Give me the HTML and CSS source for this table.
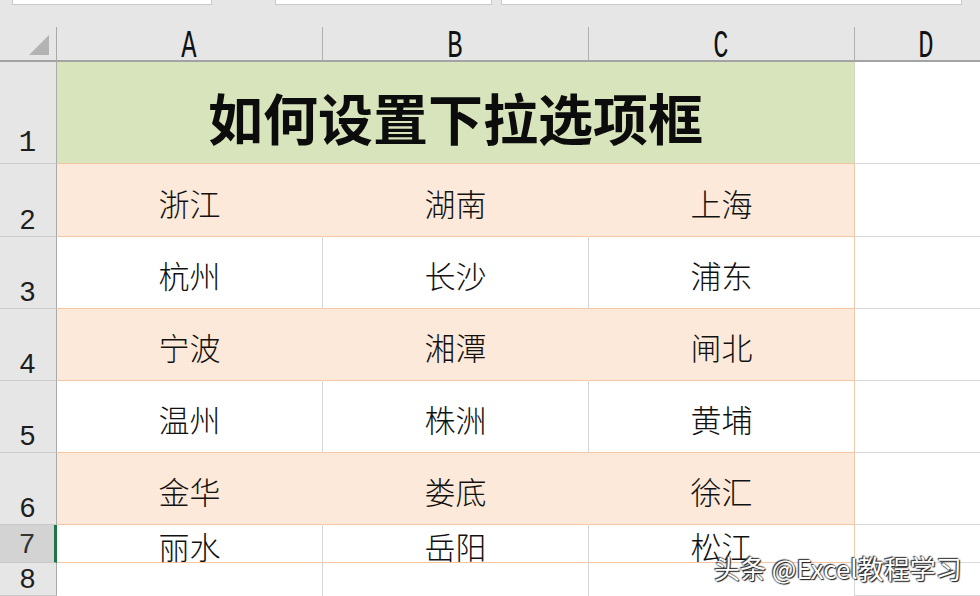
FILE: index.html
```html
<!DOCTYPE html>
<html lang="zh-CN">
<head>
<meta charset="utf-8">
<title>如何设置下拉选项框</title>
<link rel="stylesheet" href="styles.css">
</head>
<body>
<div class="app">
  <div class="toolbar">
    <div class="box b1"></div>
    <div class="box b2"></div>
    <div class="box b3"></div>
  </div>
  <div class="sheet">
    <div class="corner"><span class="tri"></span></div>
    <div class="colhead"><span>A</span></div>
    <div class="colhead"><span>B</span></div>
    <div class="colhead"><span>C</span></div>
    <div class="colhead last"><span>D</span></div>

    <div class="rowhead"><span class="mono">1</span></div>
    <div class="title">如何设置下拉选项框</div>
    <div class="cell d"></div>

    <div class="rowhead"><span>2</span></div>
    <div class="cell p">浙江</div>
    <div class="cell p">湖南</div>
    <div class="cell p c">上海</div>
    <div class="cell d"></div>

    <div class="rowhead"><span>3</span></div>
    <div class="cell w">杭州</div>
    <div class="cell w">长沙</div>
    <div class="cell w c">浦东</div>
    <div class="cell d"></div>

    <div class="rowhead"><span>4</span></div>
    <div class="cell p">宁波</div>
    <div class="cell p">湘潭</div>
    <div class="cell p c">闸北</div>
    <div class="cell d"></div>

    <div class="rowhead"><span>5</span></div>
    <div class="cell w">温州</div>
    <div class="cell w">株洲</div>
    <div class="cell w c">黄埔</div>
    <div class="cell d"></div>

    <div class="rowhead"><span>6</span></div>
    <div class="cell p">金华</div>
    <div class="cell p">娄底</div>
    <div class="cell p c">徐汇</div>
    <div class="cell d"></div>

    <div class="rowhead sel"><span>7</span></div>
    <div class="cell w short">丽水</div>
    <div class="cell w short">岳阳</div>
    <div class="cell w c short">松江</div>
    <div class="cell d"></div>

    <div class="rowhead"><span>8</span></div>
    <div class="cell e"></div>
    <div class="cell e"></div>
    <div class="cell e"></div>
    <div class="cell d"></div>
  </div>
  <div class="watermark">头条 @Excel教程学习</div>
</div>
</body>
</html>
```

FILE: styles.css
```css
* { box-sizing: border-box; }
html, body { margin: 0; padding: 0; }
body { background: #ffffff; font-family: "Noto Sans CJK SC", "Noto Sans", sans-serif; }

.app {
  position: relative;
  width: 980px;
  height: 596px;
  overflow: hidden;
  background: #ffffff;
}

.toolbar {
  height: 27px;
  background: #e6e6e6;
  display: flex;
  align-items: flex-start;
}
.box {
  height: 5px;
  background: #ffffff;
  border: 1px solid #c9c9c9;
  border-top: none;
}
.b1 { margin-left: 12px; width: 200px; }
.b2 { margin-left: 63px; width: 217px; }
.b3 { margin-left: 9px; width: 461px; }

.sheet {
  display: grid;
  grid-template-columns: 57px 266px 266px 266px 125px;
  grid-template-rows: 35px 102px 73px 72px 72px 72px 72px 38px 33px;
}

.corner {
  background: #e6e6e6;
  border-right: 1px solid #a9a9a9;
  border-bottom: 2px solid #a3a3a3;
  display: flex;
  justify-content: flex-end;
  align-items: flex-end;
  padding: 0 7px 5px 0;
}
.tri {
  width: 20px;
  height: 20px;
  background: #b3b3b3;
  clip-path: polygon(100% 0, 100% 100%, 0 100%);
}

.colhead {
  background: #e6e6e6;
  border-right: 1px solid #b0b0b0;
  border-bottom: 2px solid #a3a3a3;
  display: flex;
  justify-content: center;
  align-items: center;
  padding-top: 6px;
  font-family: "Liberation Mono", monospace;
  font-size: 30px;
  color: #111111;
}
.colhead span {
  display: inline-block;
  transform: scale(0.85, 1.3);
}
.colhead.last { border-right: none; padding-left: 18px; }

.rowhead {
  background: #e6e6e6;
  border-right: 1px solid #a9a9a9;
  border-bottom: 1px solid #c9c9c9;
  display: flex;
  justify-content: center;
  align-items: flex-end;
  padding: 0 1px 2px 0;
  font-family: "Liberation Sans", sans-serif;
  font-size: 28px;
  line-height: 1;
  color: #1e1e1e;
}
.rowhead .mono {
  font-family: "Liberation Mono", monospace;
  font-size: 29px;
  padding-bottom: 3px;
}
.rowhead.sel {
  background: #d3d3d3;
  border-right: 3px solid #217346;
  padding-right: 0;
  padding-bottom: 4px;
  color: #333333;
}

.title {
  grid-column: span 3;
  background: #d8e4bc;
  border-bottom: 1px solid #f4c4a0;
  border-right: 1px solid #cfd6c0;
  display: flex;
  justify-content: center;
  align-items: center;
  padding-top: 8px;
  font-family: "Noto Sans CJK SC", sans-serif;
  font-weight: 600;
  font-size: 55px;
  line-height: 1;
  color: #0c0c0c;
}

.cell {
  display: flex;
  justify-content: center;
  align-items: center;
  padding-top: 4px;
  font-size: 31px;
  line-height: 1;
  color: #111111;
  font-weight: 300;
}
.cell.p {
  background: #fde9d9;
  border-bottom: 1px solid #f6c6a2;
  border-right: 1px solid #fde9d9;
}
.cell.w {
  background: #ffffff;
  border-bottom: 1px solid #f6c6a2;
  border-right: 1px solid #d6d6d6;
}
.cell.c { border-right: 1px solid #f1c9aa; }
.cell.short { padding-top: 0; align-items: flex-end; padding-bottom: 1px; }
.cell.e {
  background: #ffffff;
  border-right: 1px solid #d6d6d6;
}
.cell.d {
  background: #ffffff;
  border-bottom: 1px solid #d9d9d9;
}

.watermark {
  position: absolute;
  left: 714px;
  top: 553px;
  font-family: "Noto Sans CJK SC", "Noto Sans", sans-serif;
  font-size: 26px;
  line-height: 30px;
  color: #ffffff;
  white-space: nowrap;
  text-shadow: 0 0 2px #2a2a2a, 1px 1px 1px #1a1a1a, -1px -1px 1px #3a3a3a;
}
```
